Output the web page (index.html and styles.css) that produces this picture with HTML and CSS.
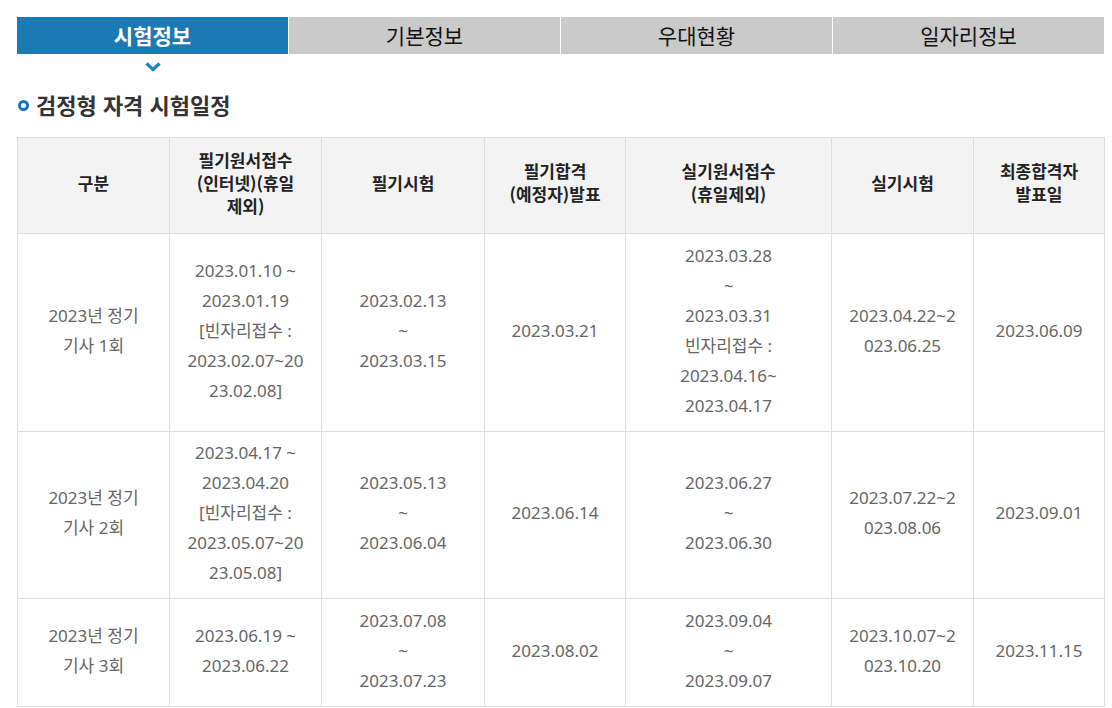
FILE: index.html
```html
<!DOCTYPE html>
<html lang="ko">
<head>
<meta charset="utf-8">
<title>시험정보</title>
<link rel="stylesheet" href="styles.css">
</head>
<body>
<div class="page">
  <nav class="tabs">
    <a class="tab active">시험정보</a>
    <a class="tab">기본정보</a>
    <a class="tab">우대현황</a>
    <a class="tab">일자리정보</a>
  </nav>
  <div class="pointer-row">
    <div class="pointer-cell">
      <svg class="chevron" width="16" height="10" viewBox="0 0 16 10"><path d="M1.5 1.5 L8 7.5 L14.5 1.5" fill="none" stroke="#1f86c8" stroke-width="3.4"/></svg>
    </div>
  </div>
  <h2 class="section-title"><span class="bullet"></span>검정형 자격 시험일정</h2>
  <table class="schedule">
    <colgroup>
      <col style="width:152px"><col style="width:152px"><col style="width:163px"><col style="width:141px"><col style="width:206px"><col style="width:142px"><col style="width:131px">
    </colgroup>
    <thead>
      <tr>
        <th>구분</th>
        <th>필기원서접수<br>(인터넷)(휴일<br>제외)</th>
        <th>필기시험</th>
        <th>필기합격<br>(예정자)발표</th>
        <th>실기원서접수<br>(휴일제외)</th>
        <th>실기시험</th>
        <th>최종합격자<br>발표일</th>
      </tr>
    </thead>
    <tbody>
      <tr class="r1">
        <td>2023년 정기<br>기사 1회</td>
        <td>2023.01.10 ~<br>2023.01.19<br>[빈자리접수 :<br>2023.02.07~20<br>23.02.08]</td>
        <td>2023.02.13<br>~<br>2023.03.15</td>
        <td>2023.03.21</td>
        <td>2023.03.28<br>~<br>2023.03.31<br>빈자리접수 :<br>2023.04.16~<br>2023.04.17</td>
        <td>2023.04.22~2<br>023.06.25</td>
        <td>2023.06.09</td>
      </tr>
      <tr class="r2">
        <td>2023년 정기<br>기사 2회</td>
        <td>2023.04.17 ~<br>2023.04.20<br>[빈자리접수 :<br>2023.05.07~20<br>23.05.08]</td>
        <td>2023.05.13<br>~<br>2023.06.04</td>
        <td>2023.06.14</td>
        <td>2023.06.27<br>~<br>2023.06.30</td>
        <td>2023.07.22~2<br>023.08.06</td>
        <td>2023.09.01</td>
      </tr>
      <tr class="r3">
        <td>2023년 정기<br>기사 3회</td>
        <td>2023.06.19 ~<br>2023.06.22</td>
        <td>2023.07.08<br>~<br>2023.07.23</td>
        <td>2023.08.02</td>
        <td>2023.09.04<br>~<br>2023.09.07</td>
        <td>2023.10.07~2<br>023.10.20</td>
        <td>2023.11.15</td>
      </tr>
    </tbody>
  </table>
</div>
</body>
</html>
```

FILE: styles.css
```css
* { box-sizing: border-box; }
html, body { margin: 0; padding: 0; background: #fff; }
body {
  font-family: "Noto Sans", "Noto Sans CJK KR", sans-serif;
  color: #333;
}
.page {
  padding: 17px 8px 0 17px;
  width: 1112px;
}
.tabs {
  display: grid;
  grid-template-columns: repeat(4, 1fr);
  column-gap: 1px;
  width: 1087px;
  height: 37px;
}
.tab {
  display: flex;
  align-items: center;
  justify-content: center;
  background: #cacaca;
  color: #111;
  font-family: "Noto Sans CJK KR", sans-serif;
  font-size: 21px;
  line-height: 37px;
}
.tab.active {
  background: #1b79b3;
  color: #fff;
  font-weight: bold;
}
.pointer-row {
  display: grid;
  grid-template-columns: repeat(4, 1fr);
  width: 1087px;
  height: 21px;
}
.pointer-cell {
  display: flex;
  justify-content: center;
  padding-top: 8px;
}
.chevron { display: block; }
.section-title {
  display: flex;
  align-items: center;
  margin: 14px 0 18px 0;
  font-family: "Noto Sans CJK KR", sans-serif;
  font-size: 22px;
  font-weight: bold;
  line-height: 30px;
  color: #333;
}
.bullet {
  width: 11px;
  height: 11px;
  border: 3px solid #1a72b4;
  border-radius: 50%;
  margin: 2px 7px 0 1px;
}
.schedule {
  border-collapse: collapse;
  table-layout: fixed;
  width: 1087px;
}
.schedule th, .schedule td {
  border: 1px solid #dedede;
  text-align: center;
  vertical-align: middle;
  padding: 0 2px;
}
.schedule th {
  background: #f3f3f3;
  color: #222;
  font-weight: bold;
  font-family: "Noto Sans CJK KR", sans-serif;
  font-size: 17px;
  line-height: 23px;
  height: 96px;
  padding-bottom: 7px;
}
.schedule td {
  color: #666;
  font-size: 17px;
  line-height: 30px;
  padding-bottom: 4px;
}
.schedule .r1 td { height: 198px; }
.schedule .r2 td { height: 167px; }
.schedule .r3 td { height: 108px; }
```
